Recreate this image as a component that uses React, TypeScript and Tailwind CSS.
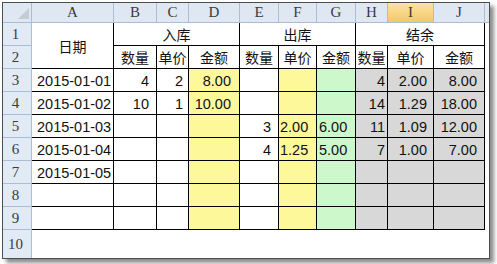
import React from "react"

const colLetters = ["A", "B", "C", "D", "E", "F", "G", "H", "I", "J"]
const colWidths = [82, 43, 32, 51, 39, 38, 39, 32, 46, 51]

// fill + alignment for the body rows (3..9)
const bodyStyle = [
  "text-left pl-[5px]",
  "text-right pr-[7px]",
  "text-right pr-[5px]",
  "text-right pr-[8px] bg-[#fdf99b]",
  "text-right pr-[7px]",
  "text-left pl-[1px] bg-[#fdf99b]",
  "text-left pl-[2px] bg-[#ccf8cc]",
  "text-right pr-[2px] bg-[#d8d8d8]",
  "text-right pr-[6px] bg-[#d8d8d8]",
  "text-right pr-[7px] bg-[#d8d8d8]",
]

const rows: string[][] = [
  ["2015-01-01", "4", "2", "8.00", "", "", "", "4", "2.00", "8.00"],
  ["2015-01-02", "10", "1", "10.00", "", "", "", "14", "1.29", "18.00"],
  ["2015-01-03", "", "", "", "3", "2.00", "6.00", "11", "1.09", "12.00"],
  ["2015-01-04", "", "", "", "4", "1.25", "5.00", "7", "1.00", "7.00"],
  ["2015-01-05", "", "", "", "", "", "", "", "", ""],
  ["", "", "", "", "", "", "", "", "", ""],
  ["", "", "", "", "", "", "", "", "", ""],
]

const sans = "font-['Liberation_Sans','Noto_Sans_CJK_SC',sans-serif]"
const cjk = "font-['Noto_Sans_CJK_SC','Liberation_Sans',sans-serif]"
const serif = "font-['Liberation_Serif',serif]"

function RowHead({ n, tall }: { n: number; tall?: boolean }) {
  return (
    <td
      className={`bg-[#e2eaf5] border-r border-b border-[#a9bdd6] text-center pr-[3px] text-[15px] leading-none text-[#3b3b3b] ${serif} ${tall ? "h-[28px] border-b-0" : "h-[23px]"}`}
    >
      {n}
    </td>
  )
}

function GroupCell({ label, span }: { label: string; span: number }) {
  return (
    <td colSpan={span} className={`border-r border-b border-black text-center text-[14px] leading-none text-[#111] ${cjk}`}>
      {label}
    </td>
  )
}

function SubCell({ label }: { label: string }) {
  return (
    <td className={`border-r border-b border-black text-center text-[14px] leading-none text-[#111] ${cjk}`}>
      {label}
    </td>
  )
}

export default function App() {
  return (
    <div className="w-[497px] h-[264px] bg-white pl-[2px] pt-[2px]">
      <div className="w-[488px] h-[257px] border border-[#4d4d4d] bg-white overflow-hidden shadow-[4px_4px_4px_rgba(0,0,0,0.45)]">
        <table className="table-fixed border-separate border-spacing-0 w-[486px]">
          <colgroup>
            <col className="w-[29px]" />
            {colWidths.map((w, i) => (
              <col key={i} style={{ width: w }} />
            ))}
            <col className="w-[4px]" />
          </colgroup>
          <thead>
            <tr>
              <th className="h-[20px] bg-[#dfe7f2] border-r border-b border-[#a9bdd6] p-0">
                <svg width="28" height="19" viewBox="0 0 28 19" className="block">
                  <polygon points="26,5 26,16 15,16" fill="#c6ccd4" />
                </svg>
              </th>
              {colLetters.map((c) => (
                <th
                  key={c}
                  className={`h-[20px] border-r border-b border-[#a9bdd6] font-normal text-[15px] leading-none text-[#3b3b3b] ${serif} ${
                    c === "I" ? "bg-gradient-to-b from-[#fbe4a4] to-[#f4c764]" : "bg-[#dfe7f2]"
                  }`}
                >
                  {c}
                </th>
              ))}
              <th className="bg-[#dfe7f2] border-b border-[#a9bdd6]" />
            </tr>
          </thead>
          <tbody>
            <tr>
              <RowHead n={1} />
              <td rowSpan={2} className={`border-r border-b border-black text-center text-[14px] leading-none text-[#111] ${cjk}`}>
                日期
              </td>
              <GroupCell label="入库" span={3} />
              <GroupCell label="出库" span={3} />
              <GroupCell label="结余" span={3} />
              <td />
            </tr>
            <tr>
              <RowHead n={2} />
              {["数量", "单价", "金额", "数量", "单价", "金额", "数量", "单价", "金额"].map((t, i) => (
                <SubCell key={i} label={t} />
              ))}
              <td />
            </tr>
            {rows.map((r, ri) => (
              <tr key={ri}>
                <RowHead n={ri + 3} />
                {r.map((v, ci) => (
                  <td
                    key={ci}
                    className={`border-r border-b border-black pt-[2px] text-[14.5px] leading-none text-[#111] whitespace-nowrap overflow-hidden ${sans} ${bodyStyle[ci]}`}
                  >
                    {v}
                  </td>
                ))}
                <td />
              </tr>
            ))}
            <tr>
              <RowHead n={10} tall />
              {colLetters.map((c) => (
                <td key={c} />
              ))}
              <td />
            </tr>
          </tbody>
        </table>
      </div>
    </div>
  )
}
